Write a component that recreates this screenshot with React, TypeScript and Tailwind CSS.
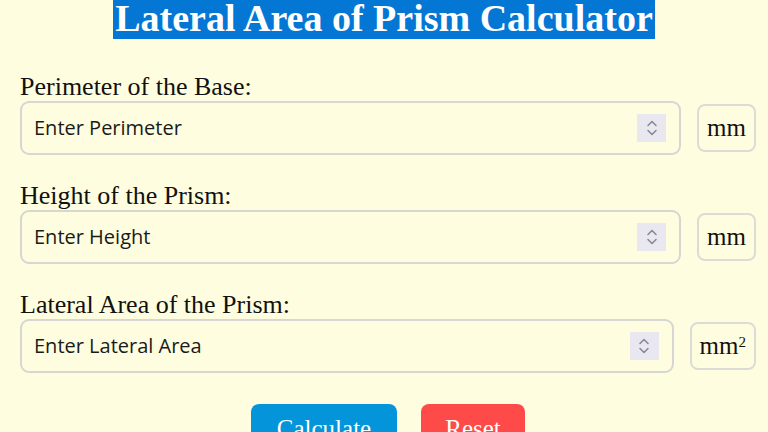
import React from 'react'

const fields = [
  { label: 'Perimeter of the Base:', placeholder: 'Enter Perimeter', unit: 'mm' },
  { label: 'Height of the Prism:', placeholder: 'Enter Height', unit: 'mm' },
  { label: 'Lateral Area of the Prism:', placeholder: 'Enter Lateral Area', unit: 'mm²' },
]

function Spinner() {
  return (
    <div className="flex h-[28px] w-[29px] items-center justify-center bg-[#e9e7ef]">
      <svg width="14" height="20" viewBox="0 0 14 20" fill="none" stroke="#8a8a96" strokeWidth="1.6" strokeLinecap="round" strokeLinejoin="round">
        <path d="M3 7.5 L7 3.5 L11 7.5" />
        <path d="M3 12.5 L7 16.5 L11 12.5" />
      </svg>
    </div>
  )
}

export default function App() {
  return (
    <div className="h-[432px] w-full overflow-hidden bg-[#fefddf] font-['Liberation_Serif',serif] text-[#111]">
      <h1 className="text-center text-[38px] font-bold leading-[37px]">
        <span className="bg-[#0477d5] px-[2px] text-white">Lateral Area of Prism Calculator</span>
      </h1>

      <div className="pl-[20px] pr-[12px] pt-[36px]">
        {fields.map((f, i) => (
          <div key={i} className="mb-[27px]">
            <label className="block text-[26px] leading-[28px]">{f.label}</label>
            <div className="flex items-center gap-[16px]">
              <div className="flex h-[54px] flex-1 items-center justify-between rounded-[9px] border-2 border-[#d6d6d2] pl-[12px] pr-[13px]">
                <span className="font-['Open_Sans','DejaVu_Sans',sans-serif] text-[20px] text-[#1a1a1a]">{f.placeholder}</span>
                <Spinner />
              </div>
              <div className="flex h-[48px] items-center rounded-[8px] border-2 border-[#dcdcd6] px-[8px] text-[25px]">
                {f.unit === 'mm²' ? (
                  <span>mm<sup className="text-[15px]">2</sup></span>
                ) : (
                  f.unit
                )}
              </div>
            </div>
          </div>
        ))}

        <div className="flex justify-center gap-[24px] pt-[4px]">
          <button className="h-[52px] w-[146px] rounded-[8px] bg-[#0394da] pb-[2px] text-[25px] text-white">Calculate</button>
          <button className="h-[52px] w-[104px] rounded-[8px] bg-[#ff4a4a] pb-[2px] text-[25px] text-white">Reset</button>
        </div>
      </div>
    </div>
  )
}
